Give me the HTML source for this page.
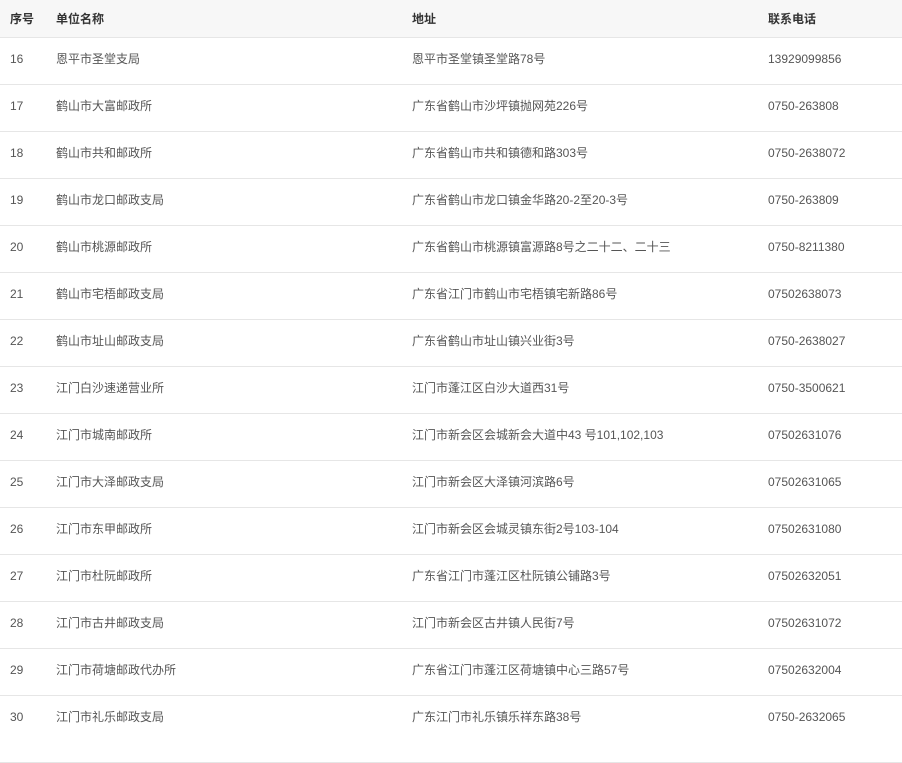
<!DOCTYPE html>
<html><head><meta charset="utf-8"><style>
body{margin:0;width:902px;height:763px;background:#fff;font-family:"Liberation Sans","Noto Sans CJK SC",sans-serif;font-size:12px;color:#555;position:relative;overflow:hidden}
.r{position:absolute;left:0;width:902px;border-bottom:1px solid #e6e6e6;box-sizing:border-box}
.r span{position:absolute;white-space:nowrap;line-height:16px}
.h{background:#f7f7f7;color:#333;font-weight:bold}
</style></head><body>
<div class="r h" style="top:0;height:38px"><span style="left:10px;top:11px">序号</span><span style="left:56px;top:11px">单位名称</span><span style="left:412px;top:11px">地址</span><span style="left:768px;top:11px">联系电话</span></div>
<div id="rows"></div>
<script>
const d=[["16","恩平市圣堂支局","恩平市圣堂镇圣堂路78号","13929099856"],
["17","鹤山市大富邮政所","广东省鹤山市沙坪镇抛网苑226号","0750-263808"],
["18","鹤山市共和邮政所","广东省鹤山市共和镇德和路303号","0750-2638072"],
["19","鹤山市龙口邮政支局","广东省鹤山市龙口镇金华路20-2至20-3号","0750-263809"],
["20","鹤山市桃源邮政所","广东省鹤山市桃源镇富源路8号之二十二、二十三","0750-8211380"],
["21","鹤山市宅梧邮政支局","广东省江门市鹤山市宅梧镇宅新路86号","07502638073"],
["22","鹤山市址山邮政支局","广东省鹤山市址山镇兴业街3号","0750-2638027"],
["23","江门白沙速递营业所","江门市蓬江区白沙大道西31号","0750-3500621"],
["24","江门市城南邮政所","江门市新会区会城新会大道中43 号101,102,103","07502631076"],
["25","江门市大泽邮政支局","江门市新会区大泽镇河滨路6号","07502631065"],
["26","江门市东甲邮政所","江门市新会区会城灵镇东街2号103-104","07502631080"],
["27","江门市杜阮邮政所","广东省江门市蓬江区杜阮镇公铺路3号","07502632051"],
["28","江门市古井邮政支局","江门市新会区古井镇人民街7号","07502631072"],
["29","江门市荷塘邮政代办所","广东省江门市蓬江区荷塘镇中心三路57号","07502632004"],
["30","江门市礼乐邮政支局","广东江门市礼乐镇乐祥东路38号","0750-2632065"]];
let h="";d.forEach((r,i)=>{const t=38+i*47;const ht=i==14?67:47;
h+=`<div class="r" style="top:${t}px;height:${ht}px"><span style="left:10px;top:13px">${r[0]}</span><span style="left:56px;top:13px">${r[1]}</span><span style="left:412px;top:13px">${r[2]}</span><span style="left:768px;top:13px">${r[3]}</span></div>`});
document.getElementById("rows").innerHTML=h;
</script>
</body></html>
